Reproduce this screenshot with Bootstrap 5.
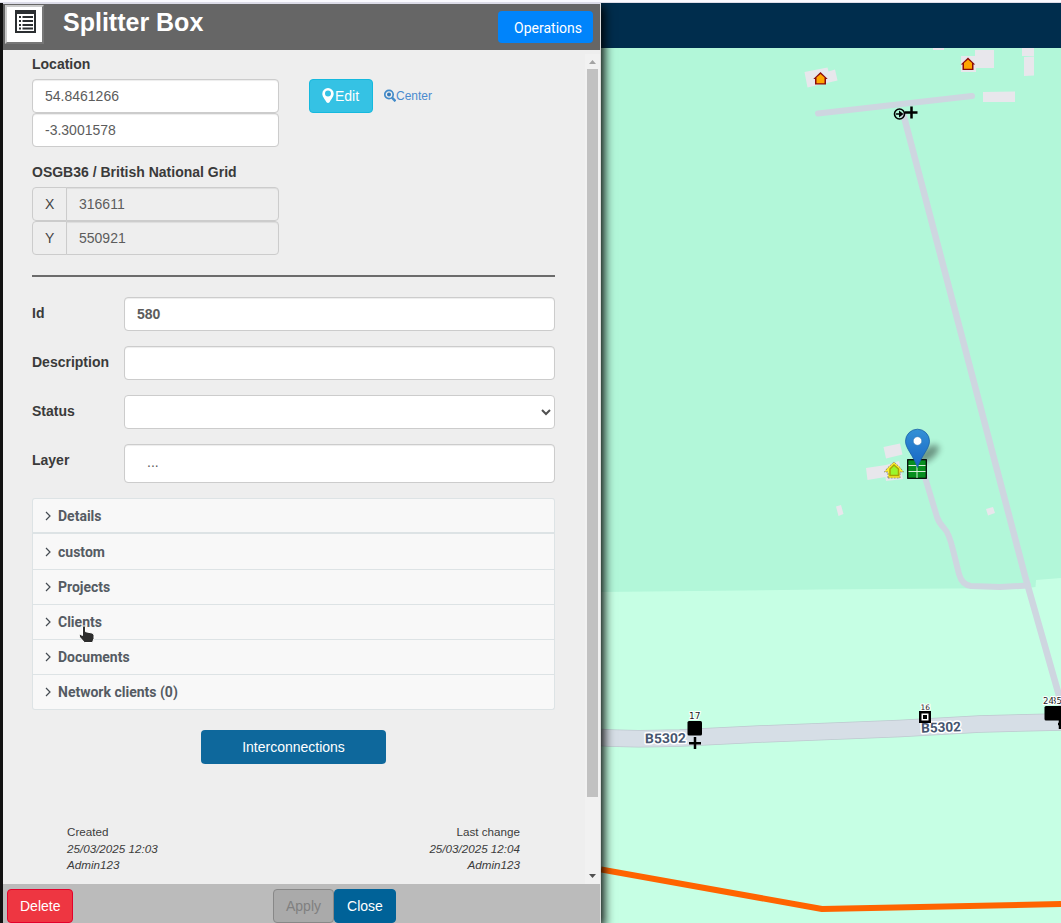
<!DOCTYPE html>
<html lang="en">
<head>
<meta charset="utf-8">
<meta name="viewport" content="width=device-width, initial-scale=1">
<title>Splitter Box</title>
<link href="https://cdn.jsdelivr.net/npm/bootstrap@5.3.0/dist/css/bootstrap.min.css" rel="stylesheet">
<style>
body{font:14px/20px "Liberation Sans",Arial,sans-serif;color:#333;background:#111}
.app{height:923px;width:1061px}
.top-strip{height:3px;background:linear-gradient(#fafaff 0 2px,#dcdce8 2px 3px);z-index:3}
.edge{width:3px;background:#111;z-index:3}
.side-panel{width:598px;background:#eee;border-right:1px solid #ddd;box-shadow:2px 4px 10px 1px #000;z-index:2;border-top:1px solid #dcdce8}
.panel-head{height:46px;background:#666}
.type-icon{width:39px;height:39px;margin:1px 0 0 2px;background:#fff;border:2px solid;border-color:#ccc #777 #777 #ccc}
.panel-title{font-size:25px;line-height:36px;font-weight:700;color:#fff;margin:0 0 0 19px}
.btn{font-size:14px;line-height:20px;padding:6px 12px;border-radius:4px}
.btn-ops{font-family:Roboto,sans-serif;font-size:14px;background:#0084fb;color:#fff;height:32px;width:95px;padding:7px 11px 5px 15px;margin:7px 7px 0 0;border:0;text-align:right;white-space:nowrap}
.scroll-zone{height:834px}
.form-zone{width:523px;margin-left:29px}
.lbl{font-weight:700;font-size:14px;line-height:20px;display:block;margin:0;color:#3a3a3a}
.form-control,.form-select,.input-group-text{font-size:14px;line-height:20px;padding:6px 12px;height:34px;border:1px solid #ccc;border-radius:4px;color:#5c5c5c}
.form-control{box-shadow:inset 0 1px 1px rgba(0,0,0,.075)}
.form-control[readonly],.input-group-text{background:#eee}
.input-group-text{color:#444;width:35px}
.short{width:247px}
.btn-edit{background:#35c2e4;border:1px solid #15b9de;color:#fff;width:64px;height:34px}
.center-link{font-size:12px;color:#4a8bce;text-decoration:none}
.rule{height:2px;background:#6b6b6b;margin-top:20px}
.form-line{height:34px;margin-bottom:15px}
.form-line .lbl{width:92px;flex:none}
.form-select{--bs-form-select-bg-img:none;background:#fff}
.groups{margin-top:15px}
.group-row{font:700 14px/20px Roboto,sans-serif;color:#555b63;background:#f8f8f8;border:1px solid #dde3e5;border-top-width:0;height:35px;padding:0 11px;gap:6px}
.group-row:first-child{border-top-width:1px;height:36px;border-radius:3px 3px 0 0;border-bottom-width:2px}
.group-row:last-child{border-radius:0 0 3px 3px}
.group-row.tall{height:36px}
.btn-inter{background:#0e689c;color:#fff;width:185px;height:34px;margin-top:20px;border:0}
.stamps{font-size:11.65px;line-height:16.5px;margin:60px 35px 0;color:#3c3c3c}
.scroll-rail{width:15px;margin-top:4px;background:#f1f1f1}
.thumb{width:11px;height:728px;background:#c1c1c1;margin-left:2px}
.panel-foot{height:39px;background:#bbb;padding:5px 0 0 4px}
.panel-foot .btn{height:34px;border:1px solid}
.btn-del{background:#ee3641;border-color:#e4002b!important;color:#fff;width:66px;margin-right:200px}
.btn-apply,.btn-apply:disabled{background:#aaa;border-color:#888!important;color:#808080;width:61px;opacity:1}
.btn-shut{background:#006298;border-color:#006298!important;color:#fff;width:62px}
.map-head{height:45px;background:#002d4d}
.pointer{left:81px;top:623px;z-index:5}
</style>
</head>
<body class="overflow-hidden">
<div class="app d-flex flex-column position-relative overflow-hidden">
  <div class="top-strip position-relative flex-shrink-0"></div>
  <div class="d-flex flex-grow-1">
    <div class="edge"></div>
    <aside class="side-panel position-relative d-flex flex-column flex-shrink-0">
      <header class="panel-head d-flex flex-shrink-0">
        <div class="type-icon d-flex justify-content-center">
          <svg width="21" height="23" viewBox="0 0 21 23" style="margin:3px 0 0 2px"><path fill="#2b2e31" fill-rule="evenodd" d="M0 0h21v23H0zM2 4v17h17V4z"/><path fill="#2b2e31" d="M4 6h2v2H4zM7.500 6H18v2H7.500zM4 10h2v2H4zM7.500 10H18v2H7.500zM4 14h2v2H4zM7.500 14H18v2H7.500zM4 17.500h2v2H4zM7.500 17.500H18v2H7.500z"/></svg>
        </div>
        <h1 class="panel-title">Splitter Box</h1>
        <button class="btn btn-ops ms-auto">Operations</button>
      </header>
      <div class="scroll-zone d-flex justify-content-between flex-shrink-0">
        <main class="form-zone">
          <label class="lbl" style="margin-top:4px">Location</label>
          <div class="d-flex" style="margin-top:5px">
            <div class="short">
              <input class="form-control" value="54.8461266">
              <input class="form-control" value="-3.3001578">
            </div>
            <button class="btn btn-edit d-flex align-items-center" style="margin-left:30px"><svg width="12" height="15" viewBox="0 0 12 15" class="flex-shrink-0" style="margin-top:-2px"><path fill="#fff" fill-rule="evenodd" d="M6 0a5.700 5.700 0 0 1 5.700 5.700C11.700 8 10.500 9.200 7.500 14.200q-1.500 1.500-3 0C1.500 9.200.3 8 .3 5.700A5.700 5.700 0 0 1 6 0zm0 2.600a3 3 0 1 0 0 6 3 3 0 0 0 0-6z"/></svg><span style="margin-left:1px">Edit</span></button>
            <a href="#" class="center-link d-flex align-items-center" style="height:34px;margin-left:11px"><svg width="12" height="13" viewBox="0 0 12 13" style="margin-top:-2px"><circle cx="5" cy="5.500" r="4.200" fill="none" stroke="#428bca" stroke-width="1.700"/><circle cx="5" cy="5.500" r="2" fill="#3579b8"/><path stroke="#428bca" stroke-width="2.400" d="M8 8.700l3.500 3.600"/></svg>Center</a>
          </div>
          <label class="lbl" style="margin-top:15px">OSGB36 / British National Grid</label>
          <div style="margin-top:5px" class="short">
            <div class="input-group"><span class="input-group-text">X</span><input class="form-control" value="316611" readonly></div>
            <div class="input-group"><span class="input-group-text">Y</span><input class="form-control" value="550921" readonly></div>
          </div>
          <div class="rule"></div>
          <div class="form-line d-flex" style="margin-top:20px"><label class="lbl" style="margin-top:6px">Id</label><input class="form-control fw-bold" value="580"></div>
          <div class="form-line d-flex"><label class="lbl" style="margin-top:6px">Description</label><input class="form-control"></div>
          <div class="form-line d-flex position-relative"><label class="lbl" style="margin-top:6px">Status</label><select class="form-select" aria-label="Status"><option></option></select><svg class="position-absolute" style="right:4px;top:14px" width="10" height="7" viewBox="0 0 10 7"><path d="M1 1l4 4 4-4" fill="none" stroke="#505050" stroke-width="2"/></svg></div>
          <div class="form-line d-flex" style="height:39px"><label class="lbl" style="margin-top:6px">Layer</label><div class="form-control" style="height:39px;padding:7px 22px">...</div></div>
          <div class="groups">
            <div class="group-row d-flex align-items-center"><svg width="8" height="10" viewBox="0 0 8 10"><path d="M2 1l4 4-4 4" fill="none" stroke="#444b52" stroke-width="1.200"/></svg>Details</div>
            <div class="group-row tall d-flex align-items-center"><svg width="8" height="10" viewBox="0 0 8 10"><path d="M2 1l4 4-4 4" fill="none" stroke="#444b52" stroke-width="1.200"/></svg>custom</div>
            <div class="group-row d-flex align-items-center"><svg width="8" height="10" viewBox="0 0 8 10"><path d="M2 1l4 4-4 4" fill="none" stroke="#444b52" stroke-width="1.200"/></svg>Projects</div>
            <div class="group-row d-flex align-items-center"><svg width="8" height="10" viewBox="0 0 8 10"><path d="M2 1l4 4-4 4" fill="none" stroke="#444b52" stroke-width="1.200"/></svg>Clients</div>
            <div class="group-row d-flex align-items-center"><svg width="8" height="10" viewBox="0 0 8 10"><path d="M2 1l4 4-4 4" fill="none" stroke="#444b52" stroke-width="1.200"/></svg>Documents</div>
            <div class="group-row d-flex align-items-center"><svg width="8" height="10" viewBox="0 0 8 10"><path d="M2 1l4 4-4 4" fill="none" stroke="#444b52" stroke-width="1.200"/></svg>Network clients (0)</div>
          </div>
          <div class="text-center"><button class="btn btn-inter">Interconnections</button></div>
          <div class="stamps d-flex justify-content-between">
            <div>Created<br><i>25/03/2025 12:03</i><br><i>Admin123</i></div>
            <div class="text-end">Last change<br><i>25/03/2025 12:04</i><br><i>Admin123</i></div>
          </div>
        </main>
        <div class="scroll-rail d-flex flex-column">
          <svg width="15" height="15" class="flex-shrink-0"><path fill="#a3a3a3" d="M4 10l3.500-4 3.500 4z"/></svg>
          <div class="thumb"></div>
          <svg width="15" height="15" class="mt-auto"><path fill="#505050" d="M4 5l3.500 4L11 5z"/></svg>
        </div>
      </div>
      <footer class="panel-foot d-flex flex-shrink-0">
        <button class="btn btn-del">Delete</button>
        <button class="btn btn-apply" disabled>Apply</button>
        <button class="btn btn-shut">Close</button>
      </footer>
    </aside>
    <section class="d-flex flex-column flex-shrink-0">
      <div class="map-head"></div>
      <svg width="460" height="875" viewBox="601 48 460 875" font-family="Roboto,sans-serif">
        <defs>
          <linearGradient id="pin" x1="0" y1="0" x2="0" y2="1"><stop offset="0" stop-color="#3391d6"/><stop offset="1" stop-color="#1764c4"/></linearGradient>
          <filter id="soft" x="-50%" y="-50%" width="200%" height="200%"><feGaussianBlur stdDeviation="3"/></filter>
          <g id="house"><path d="M-5.500 6V0.500H-7.200L0-6.500 7.200 .5H5.500V6z" fill="#8b0a0a"/><path d="M-4 4.700V-1L0-4.400 4-1V4.700z" fill="#ffa500"/></g>
        </defs>
        <path fill="#c6ffe4" d="M601 48h460v875H601z"/>
        <path fill="#b2f7d9" d="M601 48h460v530l-25 2-.5 7-8 1L820 589.500l-219 2.500z"/>
        <g fill="#e8e7ec">
          <path d="M804.500 72l23-4.500 1 4 6.500-2 2.500 11-30 7zM933 48h11v2h-11zM961 56h14V50h19v18h-18v4h-15zM1022 48h12v8h-12zM1024 57l10-.5v19l-10 .5zM983 92l32-.5v10.500h-32z"/>
          <path d="M883.500 447l16.500-3.500 2.500 11-16.500 4zM866 468l20-3 13-4 4 18-17 2-.5-4-18 3zM836 506.500l5-1.500 2.500 9-5 2zM986 509l7-2 2 6-7 2.500z"/>
        </g>
        <g fill="none" stroke="#ced6e0" stroke-width="6" stroke-linecap="round" stroke-linejoin="round">
          <path d="M818 113.500L972 96"/><path stroke-width="6.500" d="M903 113l122 463 37 130" stroke-linecap="butt"/>
          <path d="M924 474L937 517Q939 523 944 528T953 550L959 574Q962 585 971 586L1000 587 1028 585.500"/>
        </g>
        <path fill="none" stroke="#bdc9cf" stroke-width="17.500" d="M601 737.500Q625 739.500 680 738L760 734 900 728.500 980 724 1061 722"/>
        <path fill="none" stroke="#d6dee6" stroke-width="16" d="M601 737.500Q625 739.500 680 738L760 734 900 728.500 980 724 1061 722"/>
        <path fill="none" stroke="#ff6400" stroke-width="6" stroke-linejoin="round" d="M601 869.500L822 909 1061 904"/>
        <use href="#house" x="820.500" y="78.500"/><use href="#house" x="968" y="64"/>
        <g fill="none" stroke="#000"><circle cx="899.500" cy="114" r="5" stroke-width="1.600"/><path stroke-width="2.500" d="M905 112.500h12.500M911.500 106.500v12"/><path stroke-width="1.500" d="M896 114h6"/></g><path d="M899 110.500l4.500 3.500-4.500 3.500z"/>
        <g stroke="#fff" stroke-width="3" paint-order="stroke" stroke-linejoin="round" fill="#475670" font-size="13.500" font-weight="700">
          <text x="645" y="743" textLength="41" lengthAdjust="spacingAndGlyphs" transform="rotate(-1 665 738)">B5302</text>
          <text x="921" y="732" textLength="40" lengthAdjust="spacingAndGlyphs" transform="rotate(-2 941 727)">B5302</text>
        </g>
        <rect x="687.500" y="721" width="14.500" height="14.500" rx="1.500"/><path stroke="#000" stroke-width="2.500" d="M689 743.200h12M695 737v12"/>
        <rect x="919" y="711" width="12" height="12"/><rect x="921.500" y="713.500" width="7" height="7" fill="#fff"/><rect x="923" y="715" width="4" height="4"/>
        <rect x="1044.500" y="706" width="20" height="14.500" rx="1.500"/><path stroke="#000" stroke-width="2.500" d="M1058 724h5M1060 719v10"/>
        <g font-family="DejaVu Sans,sans-serif" fill="#222" stroke="#fff" stroke-width="2" paint-order="stroke">
          <text x="689" y="719" font-size="9">17</text><text x="920.500" y="710" font-size="7.500">16</text><text x="1051" y="704" font-size="8.500">35</text><text x="1043" y="704" font-size="8.500">24</text>
        </g>
        <ellipse cx="928" cy="454" rx="13" ry="6" transform="rotate(-38 928 454)" fill="#000" opacity=".4" filter="url(#soft)"/>
        <path d="M888 478v-6h-3.500l3-4 6.500-6 6.500 6 3 4H900v6z" fill="#ffee2e" stroke="#777" stroke-width=".8" stroke-dasharray="2 1"/>
        <path d="M890 475.500v-6.500L894 465l4.500 4v6.500z" fill="#9bf52b" stroke="#a7a500" stroke-width="1.500"/>
        <rect x="907.700" y="459.700" width="18.600" height="18.600" fill="#078f20" stroke="#000" stroke-width="1.200"/>
        <path stroke="#d6f0da" stroke-width="1" d="M908.500 465.500h17M908.500 471.500h17M917 460.500v17.500"/>
        <path d="M917.500 429.200a12 12 0 0 1 12 12c0 7.300-7.700 13.800-12 26.300-4.300-12.500-12-19-12-26.300a12 12 0 0 1 12-12z" fill="url(#pin)" stroke="#1a62a5" stroke-width=".8"/>
        <circle cx="917.500" cy="441" r="4.300" fill="#fff" stroke="#2b76b5" stroke-width=".6"/>
      </svg>
    </section>
  </div>
  <svg class="pointer position-absolute" style="left:78px" width="17" height="21" viewBox="0 0 17 21"><path d="M4.500 3.500q1.500-1.500 3 0v5.200l6.500 1.300q2 .5 2 2.500v3l-1.500 4H6.500L1.500 14q-1-2.500 1-2.500l2 1z" fill="#2d2d2d" stroke="#fff" stroke-width="1"/></svg>
</div>
<script src="https://cdn.jsdelivr.net/npm/bootstrap@5.3.0/dist/js/bootstrap.bundle.min.js"></script>
</body>
</html>
